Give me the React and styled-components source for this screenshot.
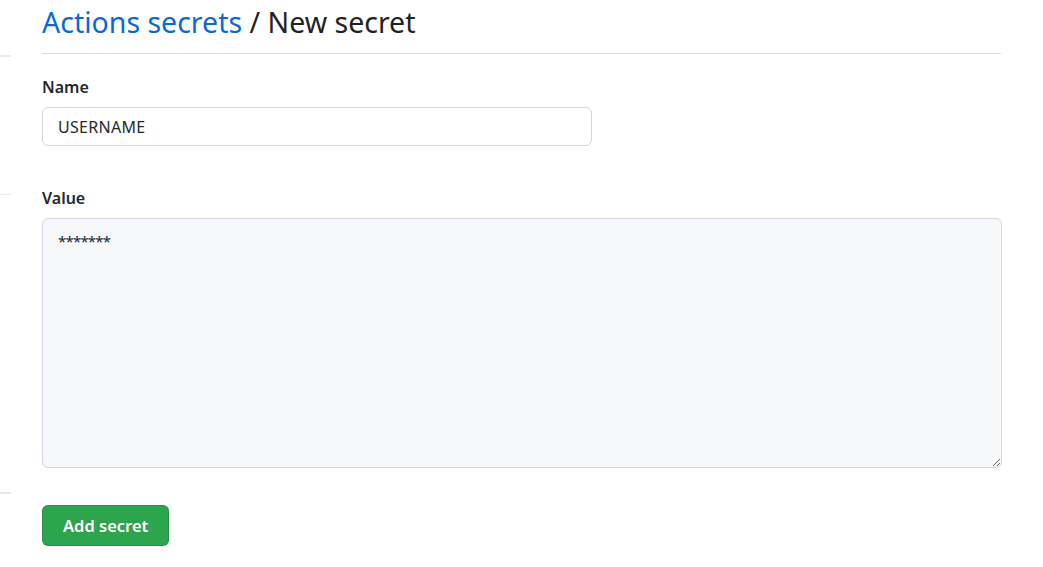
import styled, { createGlobalStyle } from "styled-components";

const GlobalStyle = createGlobalStyle`
  html, body {
    margin: 0;
    padding: 0;
    background: #ffffff;
  }
  body {
    font-family: "Noto Sans", "Open Sans", "Liberation Sans", sans-serif;
    color: #24292f;
  }
`;

const Page = styled.div`
  display: grid;
  grid-template-columns: 11px 959px;
  column-gap: 31px;
  height: 567px;
  overflow: hidden;
`;

const SideNav = styled.nav`
  display: flex;
  flex-direction: column;
`;

const SideItem = styled.div`
  height: ${(p) => p.h}px;
  border-bottom: ${(p) => p.line}px solid #e6e9ed;
  flex-shrink: 0;
`;

const Main = styled.main`
  display: flex;
  flex-direction: column;
`;

const Subhead = styled.div`
  height: 53px;
  border-bottom: 1px solid #d8dee4;
  display: flex;
  align-items: flex-start;
`;

const Heading = styled.h2`
  margin: 0;
  margin-top: 2px;
  font-size: 28.5px;
  font-weight: 400;
  line-height: 40px;
  color: #1f2328;
`;

const Crumb = styled.a`
  color: #0969da;
  text-decoration: none;
`;

const Form = styled.form`
  display: flex;
  flex-direction: column;
`;

const Group = styled.div`
  display: flex;
  flex-direction: column;
  margin-top: ${(p) => p.top}px;
`;

const Label = styled.label`
  font-size: 16px;
  font-weight: 600;
  line-height: 24px;
  margin-bottom: 8px;
  color: #24292f;
`;

const TextInput = styled.input`
  box-sizing: border-box;
  width: 550px;
  height: 39px;
  padding: 0 15px;
  font-family: inherit;
  font-size: 16px;
  letter-spacing: 0.3px;
  color: #24292f;
  background: #ffffff;
  border: 1px solid #d0d7de;
  border-radius: 6px;
  outline: none;
`;

const TextArea = styled.textarea`
  box-sizing: border-box;
  width: 960px;
  height: 250px;
  padding: 12px 15px;
  font-family: inherit;
  font-size: 15px;
  letter-spacing: -0.8px;
  line-height: 20px;
  color: #24292f;
  background: #f6f8fa;
  border: 1px solid #d0d7de;
  border-radius: 6px;
  outline: none;
  resize: vertical;
`;

const SubmitButton = styled.button`
  margin-top: 37px;
  align-self: flex-start;
  height: 41px;
  padding: 0 20px;
  font-family: inherit;
  font-size: 16.5px;
  font-weight: 600;
  color: #ffffff;
  background: #2da44e;
  border: 1px solid rgba(27, 31, 36, 0.15);
  border-radius: 6px;
  cursor: pointer;
`;

export default function App() {
  return (
    <>
      <GlobalStyle />
      <Page>
        <SideNav>
          <SideItem h={55} line={2} />
          <SideItem h={137} line={1} />
          <SideItem h={297} line={2} />
        </SideNav>
        <Main>
          <Subhead>
            <Heading>
              <Crumb href="#">Actions secrets</Crumb> / New secret
            </Heading>
          </Subhead>
          <Form onSubmit={(e) => e.preventDefault()}>
            <Group top={21}>
              <Label htmlFor="secret_name">Name</Label>
              <TextInput id="secret_name" defaultValue="USERNAME" />
            </Group>
            <Group top={40}>
              <Label htmlFor="secret_value">Value</Label>
              <TextArea id="secret_value" defaultValue="*******" />
            </Group>
            <SubmitButton type="submit">Add secret</SubmitButton>
          </Form>
        </Main>
      </Page>
    </>
  );
}
